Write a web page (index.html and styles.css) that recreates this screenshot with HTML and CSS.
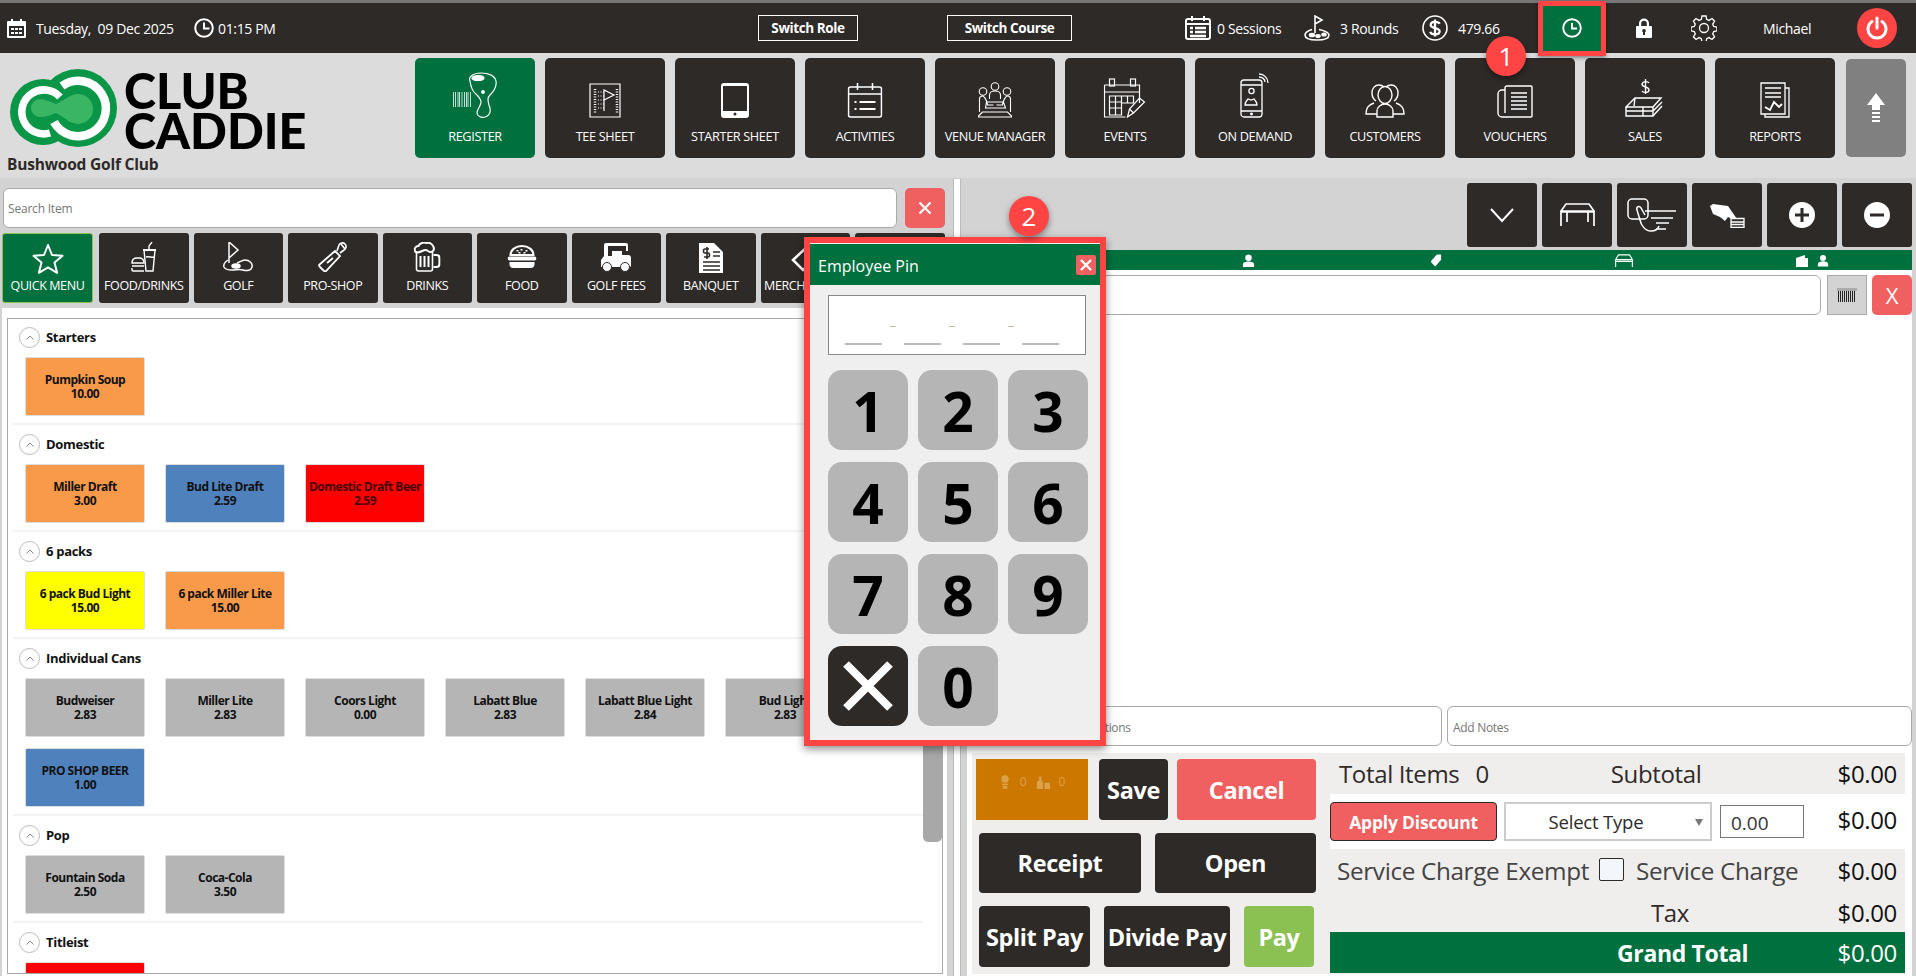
FILE: index.html
```html
<!DOCTYPE html>
<html lang="en">
<head>
<meta charset="utf-8">
<title>Club Caddie</title>
<link rel="stylesheet" href="styles.css">
</head>
<body>
<header class="topbar">
  <svg class="tb-cal" width="19" height="20" viewBox="0 0 19 20"><path fill="#fff" d="M1 3h3V1h2v2h7V1h2v2h3a1 1 0 0 1 1 1v15a1 1 0 0 1-1 1H1a1 1 0 0 1-1-1V4a1 1 0 0 1 1-1zm1 5v10h15V8z"/><path fill="#fff" d="M4 10h3v2H4zm4 0h3v2H8zm4 0h3v2h-3zM4 14h3v2H4zm4 0h3v2H8zm4 0h3v2h-3z"/></svg>
  <span class="tb-date">Tuesday,&nbsp; 09 Dec 2025</span>
  <svg class="tb-clock" width="20" height="20" viewBox="0 0 20 20" fill="none" stroke="#fff" stroke-width="2"><circle cx="10" cy="10" r="8.800"/><path d="M10 4.500V10.500H15.500"/></svg>
  <span class="tb-time">01:15 PM</span>
  <button class="switch sw-role">Switch Role</button>
  <button class="switch sw-course">Switch Course</button>
  <svg class="tb-sess" width="26" height="24" viewBox="0 0 26 24" fill="none" stroke="#fff" stroke-width="2"><rect x="1" y="3" width="24" height="20" rx="2"/><path d="M1 8h24M7 0v5M19 0v5"/><path stroke-width="2.500" d="M5 12h3M10 12h11M5 16h3M10 16h11M5 20h16"/></svg>
  <span class="tb-sess-t">0 Sessions</span>
  <svg class="tb-rounds" width="26" height="26" viewBox="0 0 26 26" fill="none" stroke="#fff" stroke-width="1.600"><path d="M11 18V1l7 4-7 4"/><path d="M8 14.500C3 16 1 18 1 20c0 3.500 6 5 12 5s12-1.500 12-5c0-2-3-4-10-5.500"/><ellipse fill="#fff" cx="8" cy="20" rx="2.500" ry="1.500"/><ellipse fill="#fff" cx="14" cy="21" rx="2" ry="1.300"/><ellipse fill="#fff" cx="20" cy="19.500" rx="2" ry="1.300"/></svg>
  <span class="tb-rounds-t">3 Rounds</span>
  <svg class="tb-dollar" width="26" height="26" viewBox="0 0 26 26"><circle cx="13" cy="13" r="12" fill="none" stroke="#fff" stroke-width="1.600"/><path fill="none" stroke="#fff" stroke-width="2.300" d="M17.500 8.800C17 7.200 15 6.800 13 6.800c-2.500 0-4.300 1.200-4.300 3.100 0 4.400 8.900 1.800 8.900 6.300 0 2-2 3.100-4.500 3.100-2.400 0-4.400-.8-4.800-2.600M13 4.500v17"/></svg>
  <span class="tb-bal">479.66</span>
  <div class="clockin">
    <svg width="20" height="20" viewBox="0 0 20 20" fill="none" stroke="#fff" stroke-width="1.900"><circle cx="10" cy="10" r="8.800"/><path d="M10 5v5.500h5"/></svg>
  </div>
  <svg class="tb-lock" width="16" height="20" viewBox="0 0 16 20"><path fill="#fff" fill-rule="evenodd" d="M3 8V5.500a5 5 0 0 1 10 0V8h2a1 1 0 0 1 1 1v10a1 1 0 0 1-1 1H1a1 1 0 0 1-1-1V9a1 1 0 0 1 1-1zm2.200 0h5.600V5.500a2.800 2.800 0 0 0-5.600 0zM8 11a1.800 1.800 0 0 0-1 3.300V17h2v-2.700A1.800 1.800 0 0 0 8 11z"/></svg>
  <svg class="tb-gear" width="26" height="26" viewBox="0 0 26 26" fill="none" stroke="#fff" stroke-width="1.300"><circle cx="13" cy="13" r="4.500"/><path d="M11 1h4l.7 3.400 2.300 1 3-1.900 2.600 2.700-1.900 2.900 1 2.300 3.300.7v3.800l-3.300.7-1 2.300 1.900 2.900-2.600 2.700-3-1.900-2.300 1-.7 3.400h-4l-.7-3.400-2.300-1-3 1.900-2.600-2.700 1.900-2.900-1-2.300-3.300-.7v-3.800l3.300-.7 1-2.300-1.900-2.900 2.600-2.700 3 1.900 2.300-1z"/></svg>
  <span class="tb-user">Michael</span>
  <button class="power" aria-label="Power">
    <svg width="22" height="24" viewBox="0 0 22 24" fill="none" stroke="#fff" stroke-width="3" stroke-linecap="round"><path d="M11 2v10M6 5.500a9 9 0 1 0 10 0"/></svg>
  </button>
</header>

<section class="header">
  <div class="brand">
    <div class="logo">
      <svg width="108" height="79" viewBox="10 9 108 79">
        <circle cx="43" cy="52" r="33" fill="#0a9647"/><circle cx="78" cy="48" r="39" fill="#0a9647"/>
        <path d="M60 37A22 22 0 1 0 50 73" fill="none" stroke="#fff" stroke-width="7.500"/>
        <path d="M62 26A27.700 27.700 0 1 1 54 62" fill="none" stroke="#fff" stroke-width="8.500"/>
        <circle cx="40" cy="48" r="9" fill="#39b564"/><circle cx="78" cy="49" r="15" fill="#39b564"/>
        <path d="M42 39Q52 42 56 44Q62 41 70 36V62Q62 56 56 53Q50 56 42 57Z" fill="#39b564"/>
      </svg>
      <div class="wordmark">CLUB<br>CADDIE</div>
    </div>
    <div class="club">Bushwood Golf Club</div>
  </div>
  <nav class="nav">
    <a class="nav-btn active">
      <svg width="44" height="46" viewBox="0 0 44 46" fill="none" stroke="#fff" stroke-width="1.200"><path stroke-width=".9" d="M.5 20v15M2.500 20v15M5 20v15M6.500 20v15M9 20v15M11.500 20v15M13.500 20v15M15 20v15M17.500 20v15" opacity=".85"/><path d="M17 9c-2-4 3-8 11-8 8 0 14 3 15 8 1 6-2 10-6 14-3 3-2 6-1 10 2 5 2 10-4 12-4 1-8-1-8-4 0-4 4-7 4-11 0-3-2-5-5-8-3-2-5-6-6-13z"/><ellipse cx="25" cy="6" rx="6" ry="2.500" fill="#fff"/><circle cx="30" cy="20" r="1.300" fill="#fff"/></svg>
      <span>REGISTER</span></a>
    <a class="nav-btn">
      <svg width="32" height="35" viewBox="0 0 32 35" fill="none" stroke="#fff" stroke-width="1.200"><path d="M1 1h30v33H1z"/><path stroke-width="2.500" stroke-dasharray="1 1.500" d="M6 6v24M28 6v24"/><path stroke-width="1.200" stroke-dasharray="1 1.500" d="M9 9h6M9 13h6M9 17h6M9 21h6M9 25h6"/><path d="M15 28V7l10 5-10 5"/></svg>
      <span>TEE SHEET</span></a>
    <a class="nav-btn">
      <svg width="28" height="35" viewBox="0 0 28 35"><path fill="#fff" fill-rule="evenodd" d="M3 0h22a3 3 0 0 1 3 3v29a3 3 0 0 1-3 3H3a3 3 0 0 1-3-3V3a3 3 0 0 1 3-3zm-1 3v25h24V3z"/><circle cx="14" cy="31" r="1.500" fill="#2e2a28"/></svg>
      <span>STARTER SHEET</span></a>
    <a class="nav-btn">
      <svg width="35" height="35" viewBox="0 0 35 35" fill="none" stroke="#fff" stroke-width="1.600"><rect x="1" y="4" width="33" height="30" rx="2"/><path d="M1 11h33M10 0v7M25 0v7"/><path stroke-width="2" d="M7 19h2M12 19h16M7 26h2M12 26h16"/></svg>
      <span>ACTIVITIES</span></a>
    <a class="nav-btn">
      <svg width="35" height="36" viewBox="0 0 35 36" fill="none" stroke="#fff" stroke-width="1.100"><circle cx="17.500" cy="4.500" r="3.800"/><circle cx="5.500" cy="9.500" r="3.800"/><circle cx="29.500" cy="9.500" r="3.800"/><path d="M12 17v-4c0-2 2-4 5.500-4s5.500 2 5.500 4v4M2 30V17c0-2 1-3 3-3s5 6 5 9h6M33 30V17c0-2-1-3-3-3s-5 6-5 9h-6M9 20h17l2 6H8zM5 30 1 34v1h33v-1l-4-4z"/></svg>
      <span>VENUE MANAGER</span></a>
    <a class="nav-btn">
      <svg width="43" height="40" viewBox="0 0 43 40" fill="none" stroke="#fff" stroke-width="1.200"><path d="M1 7h35v18M22 39H1V7M1 14h35"/><rect x="6" y="1" width="5" height="7"/><rect x="27" y="1" width="5" height="7"/><path d="M6 18h24v7H18v12H6zM6 24h12M6 30h12M12 18v19M18 18v7M24 18v7"/><path d="M24 39l2-8 10-11 5 4-11 11zM26 31l4 4"/></svg>
      <span>EVENTS</span></a>
    <a class="nav-btn">
      <svg width="30" height="46" viewBox="0 0 30 46" fill="none" stroke="#fff" stroke-width="1.300"><rect x="1" y="8" width="21" height="37" rx="3"/><path d="M1 13h21M1 39h21"/><circle cx="11.500" cy="19" r="2.600"/><path d="M5 33c0-2 1-4 3-6l3 1 3-1c2 2 3 4 3 6z"/><circle cx="11.500" cy="42" r=".8" fill="#fff"/><path d="M19 5c3 0 6 2 6 5M19 2c5 0 9 4 9 9"/></svg>
      <span>ON DEMAND</span></a>
    <a class="nav-btn">
      <svg width="40" height="34" viewBox="0 0 40 34" fill="none" stroke="#fff" stroke-width="1.400"><path d="M11 17c-3-2-4-5-4-8 0-5 3-8 7-8 2 0 4 1 5 2M29 17c3-2 4-5 4-8 0-5-3-8-7-8-2 0-4 1-5 2"/><ellipse cx="20" cy="11" rx="7" ry="8.500"/><path d="M12 33v-6c0-4 4-7 8-7s8 3 8 7v6zM12 30H1c0-6 2-9 8-11M28 30h11c0-6-2-9-8-11"/></svg>
      <span>CUSTOMERS</span></a>
    <a class="nav-btn">
      <svg width="36" height="33" viewBox="0 0 36 33" fill="none" stroke="#fff" stroke-width="1.400"><path d="M8 5V3a2 2 0 0 1 2-2h24a1 1 0 0 1 1 1v29a1 1 0 0 1-1 1H5a4 4 0 0 1-4-4V9a4 4 0 0 1 4-4h3v23"/><path stroke-width="1.700" d="M14 8h16M14 12h16M14 16h16M14 20h16M14 24h16"/></svg>
      <span>VOUCHERS</span></a>
    <a class="nav-btn">
      <svg width="40" height="39" viewBox="0 0 40 39" fill="none" stroke="#fff" stroke-width="1.400"><path d="M24 4c-1-2-6-2-7 1 0 4 7 2 7 6 0 3-6 3-7 1M20.500 0v15"/><path d="M10 19h26l-8 9H1zM1 28v4l27 0 9-9M1 32v5h27l9-10M10 19l-1 8M18 28v9M28 28v9"/></svg>
      <span>SALES</span></a>
    <a class="nav-btn">
      <svg width="30" height="36" viewBox="0 0 30 36" fill="none" stroke="#fff" stroke-width="1.300"><path d="M1 1h24v31H1zM25 6h4v29H5v-3"/><path d="M5 6h16M5 11h16M5 15h16"/><path stroke-width="1.800" d="M5 25l5 3 4-8 5 5 3-3"/></svg>
      <span>REPORTS</span></a>
  </nav>
  <button class="nav-up" aria-label="Collapse">
    <svg width="18" height="30" viewBox="0 0 18 30" fill="#fff"><path d="M9 0l9 12h-5v5H5v-5H0zM5 19h8v2H5zM5 23h8v2H5zM5 27h8v2H5z"/></svg>
  </button>
</section>

<main class="main">
  <section class="left">
    <div class="search-row">
      <input class="search" placeholder="Search Item">
      <button class="red-x" aria-label="Clear">
        <svg width="14" height="14" viewBox="0 0 14 14" stroke="#fff" stroke-width="2.200"><path d="M1.500 1.500l11 11M12.500 1.500l-11 11"/></svg>
      </button>
    </div>
    <div class="cats">
      <a class="cat active"><svg width="32" height="32" viewBox="0 0 32 32" fill="none" stroke="#fff" stroke-width="2"><path d="M16 2l4 10 10.500.8-8 6.700 2.600 10.300L16 24.300l-9.100 5.500 2.600-10.300-8-6.700L12 12z" stroke-linejoin="round"/></svg><span>QUICK MENU</span></a>
      <a class="cat"><svg width="26" height="30" viewBox="0 0 26 30" fill="none" stroke="#fff" stroke-width="1.400"><path stroke-width="2" d="M12 8h13"/><path d="M13 8l2 21h7l2-21M18 8V4l3-4M15 15c3-1 6 1 8 0"/><path d="M1 21c0-4 3-5 5-5h2c2 0 5 1 5 5zM1 24h12M1 26v2a1 1 0 0 0 1 1h11"/></svg><span>FOOD/DRINKS</span></a>
      <a class="cat"><svg width="30" height="30" viewBox="0 0 30 30" fill="none" stroke="#fff" stroke-width="1.500"><path d="M6 21V0l9 8-9 8" /><path d="M5 18C2 20 0 22 1 25c1 2 4 3 8 3 4 0 7-1 11 0s8 1 9-3c1-4-3-7-7-7-3 0-5 2-8 3"/><ellipse cx="13" cy="24" rx="4" ry="2" fill="#fff"/></svg><span>GOLF</span></a>
      <a class="cat"><svg width="30" height="30" viewBox="0 0 30 30" fill="none" stroke="#fff" stroke-width="1.800"><path d="M1 23L17 9l5 5L8 29c-1 1-2 0-3-1l-3-3c-1-1-1-2-1-2z"/><path d="M9 21l6-5"/><path stroke-width="1.600" d="M19 9l2-6c1-2 4-3 6-1s1 5-1 6l-4 3M23 2l4 5"/></svg><span>PRO-SHOP</span></a>
      <a class="cat"><svg width="27" height="30" viewBox="0 0 27 30" fill="none" stroke="#fff" stroke-width="1.600"><path d="M3 9v18a2 2 0 0 0 2 2h12a2 2 0 0 0 2-2V9"/><path stroke-width="2" d="M2 10C0 7 2 4 5 4c1-3 5-4 8-3 3-1 6 1 7 4 1 2 0 5-3 5-2 0-3-2-5-2-3 0-7 4-10 2z"/><path stroke-width="2" d="M7 14v11M11 14v11M15 14v11"/><path stroke-width="2.200" d="M20 13h3a3 3 0 0 1 3 3v6a3 3 0 0 1-3 3h-3"/></svg><span>DRINKS</span></a>
      <a class="cat cat-low"><svg width="29" height="24" viewBox="0 0 29 24"><path fill="none" stroke="#fff" stroke-width="2" d="M3 10C3 5 8 1 14.500 1S26 5 26 10z"/><path fill="#fff" d="M9 5h2v1.500H9zm4-1h2v1.500h-2zm5 1h2v1.500h-2zM11 7h2v1.500h-2zm5 0h2v1.500h-2z"/><rect y="11.500" width="29" height="4" rx="2" fill="#fff"/><path fill="#fff" d="M2 17h25v2a4 4 0 0 1-4 4H6a4 4 0 0 1-4-4z"/></svg><span>FOOD</span></a>
      <a class="cat"><svg width="32" height="30" viewBox="0 0 32 30" fill="#fff"><path fill-rule="evenodd" d="M6 1h20a2 2 0 0 1 2 2v6H26V4H8v10h4V9h10v4h6a3 3 0 0 1 3 3v8l-1 1H1v-7l3-4V3a2 2 0 0 1 2-2z"/><circle cx="7" cy="25" r="4.500" stroke="#2e2a28"/><circle cx="25" cy="25" r="4.500" stroke="#2e2a28"/></svg><span>GOLF FEES</span></a>
      <a class="cat"><svg width="26" height="32" viewBox="0 0 26 32"><path fill="#fff" d="M1 1h15l9 9v21H1z"/><path fill="none" stroke="#2e2a28" stroke-width="1.600" d="M11 7H7c-2 0-2 4 0 4h3c2 0 2 4 0 4H6M9 5v12M15 10h7M15 14h7M5 20h17M5 24h17M5 28h17"/></svg><span>BANQUET</span></a>
      <a class="cat"><svg width="30" height="30" viewBox="0 0 30 30" fill="none" stroke="#fff" stroke-width="2.500"><path d="M3 18L18 4l8 0 1 9-14 15z"/></svg><span>MERCHANDISE</span></a>
      <a class="cat"><svg width="30" height="30" viewBox="0 0 30 30" fill="#fff"><circle cx="15" cy="16" r="12"/></svg><span>MISC</span></a>
    </div>
    <div class="menu-wrap">
      <div class="panel">
        <div class="list">
          <section class="sec">
            <h3 class="sec-h"><span class="chev"><svg width="8" height="5" viewBox="0 0 8 5" fill="none" stroke="#888"><path d="M.5 4.500L4 1l3.500 3.500"/></svg></span>Starters</h3>
            <div class="tiles">
              <div class="tile orange">Pumpkin Soup<br>10.00</div>
            </div>
          </section>
          <section class="sec">
            <h3 class="sec-h"><span class="chev"><svg width="8" height="5" viewBox="0 0 8 5" fill="none" stroke="#888"><path d="M.5 4.500L4 1l3.500 3.500"/></svg></span>Domestic</h3>
            <div class="tiles">
              <div class="tile orange">Miller Draft<br>3.00</div>
              <div class="tile blue">Bud Lite Draft<br>2.59</div>
              <div class="tile red">Domestic Draft Beer<br>2.59</div>
            </div>
          </section>
          <section class="sec">
            <h3 class="sec-h"><span class="chev"><svg width="8" height="5" viewBox="0 0 8 5" fill="none" stroke="#888"><path d="M.5 4.500L4 1l3.500 3.500"/></svg></span>6 packs</h3>
            <div class="tiles">
              <div class="tile yellow">6 pack Bud Light<br>15.00</div>
              <div class="tile orange">6 pack Miller Lite<br>15.00</div>
            </div>
          </section>
          <section class="sec">
            <h3 class="sec-h"><span class="chev"><svg width="8" height="5" viewBox="0 0 8 5" fill="none" stroke="#888"><path d="M.5 4.500L4 1l3.500 3.500"/></svg></span>Individual Cans</h3>
            <div class="tiles">
              <div class="tile grey">Budweiser<br>2.83</div>
              <div class="tile grey">Miller Lite<br>2.83</div>
              <div class="tile grey">Coors Light<br>0.00</div>
              <div class="tile grey">Labatt Blue<br>2.83</div>
              <div class="tile grey">Labatt Blue Light<br>2.84</div>
              <div class="tile grey">Bud Light<br>2.83</div>
              <div class="tile blue">PRO SHOP BEER<br>1.00</div>
            </div>
          </section>
          <section class="sec">
            <h3 class="sec-h"><span class="chev"><svg width="8" height="5" viewBox="0 0 8 5" fill="none" stroke="#888"><path d="M.5 4.500L4 1l3.500 3.500"/></svg></span>Pop</h3>
            <div class="tiles">
              <div class="tile grey">Fountain Soda<br>2.50</div>
              <div class="tile grey">Coca-Cola<br>3.50</div>
            </div>
          </section>
          <section class="sec">
            <h3 class="sec-h"><span class="chev"><svg width="8" height="5" viewBox="0 0 8 5" fill="none" stroke="#888"><path d="M.5 4.500L4 1l3.500 3.500"/></svg></span>Titleist</h3>
            <div class="tiles">
              <div class="tile red"></div>
            </div>
          </section>
        </div>
        <div class="track"><div class="thumb"></div></div>
      </div>
    </div>
  </section>

  <div class="splitter"></div>

  <section class="right">
    <div class="tools">
      <button class="tool"><svg width="24" height="15" viewBox="0 0 24 15" fill="none" stroke="#fff" stroke-width="2"><path d="M1 1l11 12L23 1"/></svg></button>
      <button class="tool"><svg width="35" height="24" viewBox="0 0 35 24" fill="none" stroke="#fff" stroke-width="1.700"><path d="M6 1h23l5 7H1zM1 8v15M34 8v15M1 9h33M7 9v10M28 9v10"/></svg></button>
      <button class="tool"><svg width="50" height="34" viewBox="0 0 50 34" fill="none" stroke="#fff" stroke-width="1.500"><rect x="1" y="1" width="20" height="20" rx="4"/><path d="M10 12c-1-3 2-5 4-2l4 7M18 13H49M24 20H46M29 25H42M29 31H39M10 12l3 10c1 5 5 11 11 11 5 0 7-2 8-5"/></svg></button>
      <button class="tool"><svg width="35" height="26" viewBox="0 0 35 26"><path fill="#fff" d="M0 4l3-2 15 2 9 13h-5l-4-2-3 4-5-4-7-3z"/><path fill="none" stroke="#fff" stroke-width="1.300" d="M21 16.500h13v9H21zM21 20h13M21 22.500h13"/></svg></button>
      <button class="tool"><svg width="26" height="26" viewBox="0 0 26 26"><circle cx="13" cy="13" r="13" fill="#fff"/><path stroke="#2e2a28" stroke-width="3" d="M13 6v14M6 13h14"/></svg></button>
      <button class="tool"><svg width="26" height="26" viewBox="0 0 26 26"><circle cx="13" cy="13" r="13" fill="#fff"/><path stroke="#2e2a28" stroke-width="3" d="M6 13h14"/></svg></button>
    </div>
    <div class="strip">
      <span></span>
      <span><svg width="13" height="13" viewBox="0 0 14 14" fill="#fff"><circle cx="7" cy="4" r="3.500"/><path d="M1 14v-3c0-2 3-3 6-3s6 1 6 3v3z"/></svg></span>
      <span><svg width="12" height="13" viewBox="0 0 14 14" fill="#fff"><path d="M8 0h5v6l-7 8-4-4-1-2z"/></svg></span>
      <span><svg width="20" height="13" viewBox="0 0 20 14" fill="none" stroke="#fff" stroke-width="1.200"><path d="M4 1h12l3 5H1zM1 6v8M19 6v8M1 8h18"/></svg></span>
      <span class="strip-pair"><svg width="14" height="12" viewBox="0 0 14 12" fill="#fff"><path d="M1 3l9-3v3h3v9H1z"/></svg><svg width="12" height="13" viewBox="0 0 14 14" fill="#fff"><circle cx="7" cy="4" r="3.500"/><path d="M1 14v-3c0-2 3-3 6-3s6 1 6 3v3z"/></svg></span>
    </div>
    <div class="order">
      <div class="order-row">
        <input class="order-in">
        <button class="barcode" aria-label="Scan"><svg width="20" height="14" viewBox="0 0 20 14"><path fill="#aaa" d="M0 0h20v3H0z"/><path stroke="#222" stroke-width="1" d="M1.500 3v11M3.500 3v11M5.500 3v11M7.500 3v11M9.500 3v11M11.500 3v11M13.500 3v11M15.500 3v11M17.500 3v11"/></svg></button>
        <button class="red-x x-text">X</button>
      </div>
      <div class="notes">
        <input class="note note-a" placeholder="Add Special Instructions">
        <input class="note" placeholder="Add Notes">
      </div>
      <div class="summary">
        <div class="actions">
          <div class="act-row a1">
            <div class="a-orange"><svg width="12" height="14" viewBox="0 0 16 18" fill="#dba04a"><circle cx="8" cy="5" r="5"/><path d="M4 11h8v2H4zM5 14h6v4H5z"/></svg><span>0</span><svg width="14" height="14" viewBox="0 0 18 18" fill="#dba04a"><path d="M4 2h3v4l2 3v9H1V9l3-3zM11 10h7v8h-7z"/></svg><span>0</span></div>
            <button class="act dark a-save">Save</button>
            <button class="act coral a-cancel">Cancel</button>
          </div>
          <div class="act-row a2">
            <button class="act dark a-receipt">Receipt</button>
            <button class="act dark a-open">Open</button>
          </div>
          <div class="act-row a3">
            <button class="act dark a-split">Split Pay</button>
            <button class="act dark a-divide">Divide Pay</button>
            <button class="act lime a-pay">Pay</button>
          </div>
        </div>
        <div class="totals">
          <div class="t-row r1"><span class="t-items">Total Items</span><span class="t-count">0</span><span class="t-sub">Subtotal</span><span class="amt">$0.00</span></div>
          <div class="t-row r2"><button class="apply">Apply Discount</button><div class="select">Select Type<i class="caret"></i></div><input class="disc" value="0.00"><span class="amt">$0.00</span></div>
          <div class="t-row r3"><span class="sc-ex">Service Charge Exempt</span><span class="check"></span><span class="sc">Service Charge</span><span class="amt">$0.00</span></div>
          <div class="t-row r4"><span class="tax">Tax</span><span class="amt">$0.00</span></div>
          <div class="t-row r5"><span class="gt">Grand Total</span><span class="amt">$0.00</span></div>
        </div>
      </div>
    </div>
  </section>
</main>

<div class="bubble b1">1</div>
<div class="bubble b2">2</div>

<aside class="pin-modal">
  <div class="pin-head"><span>Employee Pin</span><button class="pin-close" aria-label="Close"><svg width="12" height="12" viewBox="0 0 12 12" stroke="#fff" stroke-width="2.400"><path d="M1 1l10 10M11 1L1 11"/></svg></button></div>
  <div class="pin-body">
    <div class="pin-box">
      <i class="slot"></i><i class="sep"></i><i class="slot"></i><i class="sep"></i><i class="slot"></i><i class="sep"></i><i class="slot"></i>
    </div>
    <div class="keys">
      <button class="key">1</button><button class="key">2</button><button class="key">3</button>
      <button class="key">4</button><button class="key">5</button><button class="key">6</button>
      <button class="key">7</button><button class="key">8</button><button class="key">9</button>
      <button class="key key-x" aria-label="Clear"><svg width="50" height="50" viewBox="0 0 50 50" stroke="#fff" stroke-width="8"><path d="M3 3l44 44M47 3L3 47"/></svg></button><button class="key">0</button>
    </div>
  </div>
</aside>
</body>
</html>
```
FILE: styles.css
```css
* { box-sizing: border-box; }
html, body { margin: 0; padding: 0; }
body {
  width: 1916px; height: 976px; overflow: hidden; position: relative;
  font-family: "Open Sans", "Noto Sans", sans-serif; background: #ebebeb; color: #111;
  display: flex; flex-direction: column;
}
button { font-family: inherit; border: 0; padding: 0; cursor: pointer; }
input { font-family: inherit; outline: none; }
svg { display: block; flex: none; }

/* top bar */
.topbar {
  height: 53px; flex: none; background: #2e2a28; border-top: 3px solid #777;
  display: flex; align-items: center; color: #fff; font-size: 14px; letter-spacing: -.35px;
}
.tb-cal { margin-left: 7px; }
.tb-date { margin-left: 10px; width: 148px; white-space: nowrap; }
.tb-clock { margin-left: 10px; }
.tb-time { margin-left: 4px; width: 60px; }
.switch {
  height: 26px; background: transparent; border: 1px solid #fff; color: #fff;
  font-weight: 700; font-size: 13.500px; letter-spacing: -.4px;
}
.sw-role { margin-left: 480px; width: 100px; }
.sw-course { margin-left: 89px; width: 125px; }
.tb-sess { margin-left: 113px; }
.tb-sess-t { margin-left: 6px; width: 70px; white-space: nowrap; }
.tb-rounds { margin-left: 17px; }
.tb-rounds-t { margin-left: 10px; width: 62px; white-space: nowrap; }
.tb-dollar { margin-left: 20px; }
.tb-bal { margin-left: 10px; width: 42px; }
.clockin {
  margin-left: 38px; width: 68px; height: 55px; flex: none;
  background: #00703f; border: 5px solid #ff4444;
  display: flex; align-items: center; justify-content: center;
  box-shadow: 0 2px 4px rgba(0,0,0,.4);
  position: relative; z-index: 3;
}
.tb-lock { margin-left: 30px; }
.tb-gear { margin-left: 39px; }
.tb-user { margin-left: 46px; width: 94px; }
.power {
  width: 40px; height: 40px; border-radius: 50%; background: #ff4444;
  display: flex; align-items: center; justify-content: center;
}

/* header */
.header {
  height: 125px; flex: none; background: #dcdcdc; display: flex; align-items: flex-start;
  padding-top: 5px;
}
.brand { width: 415px; flex: none; padding-top: 11px; }
.logo { display: flex; padding-left: 10px; gap: 6px; height: 81px; }
.wordmark {
  font-family: Lato, "Liberation Sans", sans-serif; font-weight: 900; font-size: 48.500px; line-height: 40px; color: #000;
  padding-top: 1px;
}
.club { margin: 3px 0 0 7px; font-weight: 700; font-size: 15.500px; color: #2e2a28; letter-spacing: -.2px; }
.nav { display: flex; gap: 10px; }
.nav-btn {
  width: 120px; height: 100px; background: #2e2a28; border-radius: 5px; color: #fff;
  position: relative; font-size: 12.700px; letter-spacing: -.35px;
  display: flex; flex-direction: column; align-items: center; justify-content: flex-end; padding-bottom: 13px;
}
.nav-btn svg { position: absolute; left: 50%; transform: translateX(-50%); bottom: 40px; }
.nav-btn.active { background: #00703f; }
.nav-up {
  margin: 1px 0 0 11px; width: 60px; height: 98px; background: #808080; border-radius: 5px;
  display: flex; align-items: center; justify-content: center;
}

/* main */
.main { flex: 1; display: flex; min-height: 0; }
.left { width: 953px; flex: none; background: #d3d3d3; display: flex; flex-direction: column; }
.search-row { display: flex; gap: 8px; padding: 10px 0 0 3px; }
.search {
  width: 894px; height: 40px; border: 1px solid #aaa; border-radius: 6px; background: #fff;
  font-size: 12px; padding: 1px 4px 0; letter-spacing: -.2px;
}
.search::placeholder, .note::placeholder { color: #777; opacity: 1; }
.red-x {
  width: 40px; height: 40px; border-radius: 5px; background: #f06060; color: #fff;
  display: flex; align-items: center; justify-content: center;
}
.cats { display: flex; gap: 5px; margin-top: 5px; padding-left: 2px; overflow: hidden; flex: none; }
.cat {
  width: 89.500px; height: 70px; flex: none; background: #2e2a28; border-radius: 3px; color: #fff;
  font-size: 12.500px; letter-spacing: -.4px; white-space: nowrap;
  display: flex; flex-direction: column; align-items: center; position: relative;
  padding-top: 44px; line-height: 17px;
}
.cat svg { position: absolute; left: 50%; transform: translateX(-50%); top: 9px; }
.cat.cat-low svg { top: 12px; }
.cat.active { background: #00703f; border: 1px solid #8bc152; width: 91px; padding-top: 43px; margin-right: 1px; }
.menu-wrap { flex: 1; min-height: 0; margin-top: 5px; background: #fff; margin-left: 2px; margin-right: 6px; padding: 10px 4px 2px 5px; }
.panel { height: 100%; border: 1px solid #aaa; display: flex; overflow: hidden; }
.list { flex: 1; min-width: 0; padding: 7px 0 0 5px; }
.sec { border-bottom: 2px solid #f4f4f4; padding-bottom: 7px; }
.sec + .sec { padding-top: 8px; }
.sec-h { margin: 0 0 9px 0; height: 22px; display: flex; align-items: center; font-size: 13px; font-weight: 700; color: #111; letter-spacing: -.3px; padding-left: 6px; }
.chev {
  width: 21px; height: 21px; border: 1px solid #bbb; border-radius: 50%; margin-right: 6px; flex: none;
  display: flex; align-items: center; justify-content: center;
}
.tiles { display: flex; flex-wrap: wrap; gap: 11px 20px; padding-left: 12px; }
.tile {
  width: 120px; height: 59px; border: 1px solid #ddd; border-radius: 2px; flex: none;
  display: flex; align-items: center; justify-content: center; text-align: center;
  font-size: 12px; font-weight: 700; line-height: 14px; color: #111; letter-spacing: -.5px;
  padding: 0 1px;
}
.orange { background: #f99a4a; }
.blue { background: #4f81bd; }
.red { background: #ff0000; color: #400; }
.yellow { background: #ffff00; }
.grey { background: #b5b5b5; }
.track { width: 19px; flex: none; }
.thumb { height: 523px; background: #a8a8a8; border-radius: 0 0 5px 5px; }

.splitter { width: 8px; flex: none; background: #fff; border: 1px solid #bbb; border-bottom: 0; border-top-color: #ccc; }

.right { flex: 1; min-width: 0; background: #d3d3d3; padding-left: 6px; padding-right: 4px; display: flex; flex-direction: column; }
.tools { display: flex; justify-content: flex-end; gap: 5px; padding-top: 5px; height: 72px; flex: none; }
.tool { width: 70px; height: 64px; background: #2e2a28; border-radius: 3px; display: flex; align-items: center; justify-content: center; }
.strip { height: 20px; flex: none; background: #00703f; display: grid; grid-template-columns: repeat(5, 1fr); justify-items: center; align-items: center; padding-right: 6px; }
.strip-pair { display: flex; gap: 8px; align-items: flex-end; }
.order { flex: 1; min-height: 0; background: #fff; display: flex; flex-direction: column; padding: 5px 0 2px 0; }
.order-row { display: flex; height: 40px; flex: none; }
.order-in { width: 854px; height: 40px; border: 1px solid #aaa; border-radius: 6px; background: #fff; }
.barcode { margin-left: 6px; width: 40px; height: 40px; background: #d3d3d3; border: 1px solid #aaa; display: flex; align-items: center; justify-content: center; }
.x-text { margin-left: 5px; font-size: 22px; font-weight: 400; }
.notes { display: flex; gap: 5px; margin-top: auto; height: 40px; flex: none; }
.note { height: 40px; border: 1px solid #aaa; border-radius: 6px; background: #fff; font-size: 12px; padding: 2px 5px 0; letter-spacing: -.3px; width: 465px; }
.note-a { width: 475px; padding-left: 36px; }
.summary { margin: 7px 7px 0 5px; height: 221px; flex: none; background: #f0eded; display: flex; }
.actions { width: 358px; flex: none; padding-top: 6px; }
.act-row { display: flex; }
.a1 { height: 61px; }
.a2 { height: 60px; margin-top: 13px; }
.a3 { height: 61px; margin-top: 13px; }
.act { height: 100%; border-radius: 4px; color: #fff; font-weight: 700; font-size: 23.500px; letter-spacing: -.4px; white-space: nowrap; }
.dark { background: #2e2a28; }
.coral { background: #f06060; }
.lime { background: #8bc152; }
.a-orange { margin-left: 4px; width: 112px; background: #cc7700; color: #dba04a; font-size: 12px; display: flex; align-items: center; justify-content: center; gap: 9px; padding-bottom: 16px; }
.a-save { margin-left: 11px; width: 69px; }
.a-cancel { margin-left: 9px; width: 139px; }
.a-receipt { margin-left: 7px; width: 162px; }
.a-open { margin-left: 14px; width: 161px; }
.a-split { margin-left: 7px; width: 111px; }
.a-divide { margin-left: 14px; width: 126px; }
.a-pay { margin-left: 14px; width: 70px; }
.totals { flex: 1; min-width: 0; display: flex; flex-direction: column; font-size: 24px; color: #2e2a28; letter-spacing: -.35px; }
.t-row { display: flex; align-items: center; padding-right: 8px; white-space: nowrap; }
.amt { margin-left: auto; color: #111; }
.r1 { height: 41px; padding-left: 9px; }
.t-count { margin-left: 16px; }
.t-sub { margin-left: 122px; }
.r2 { height: 55px; background: #fff; }
.r2 .amt { padding-bottom: 4px; }
.apply { width: 167px; height: 39px; background: #f06060; border: 1px solid #2e2a28; border-radius: 4px; color: #fff; font-weight: 700; font-size: 17.500px; letter-spacing: -.2px; }
.select {
  margin-left: 7px; width: 208px; height: 39px; background: #fff; border: 2px solid #ccc; font-size: 18.500px;
  display: flex; align-items: center; justify-content: center; position: relative; padding-right: 24px; letter-spacing: -.2px;
}
.caret { position: absolute; right: 7px; top: 15px; border: 4px solid transparent; border-top: 7px solid #777; border-bottom: 0; }
.disc { margin-left: 8px; width: 84px; height: 33px; border: 1px solid #777; font-size: 19px; padding: 2px 10px 0; color: #333; }
.r3 { height: 44px; padding-left: 7px; color: #444; font-size: 24.300px; }
.r3 .sc-ex, .r3 .sc { padding-bottom: 2px; }
.r3 .amt { font-size: 24px; padding-bottom: 2px; }
.check { margin-left: 10px; width: 25px; height: 23px; border: 1px solid #2e2a28; background: #f3f6fb; border-radius: 2px; flex: none; margin-bottom: 4px; }
.sc { margin-left: 12px; }
.r4 { height: 39px; }
.tax { margin-left: 321px; }
.r5 { height: 41px; background: #00703f; color: #fff; font-weight: 600; }
.r5 .amt { color: #fff; font-weight: 400; }
.gt { margin-left: 287px; font-weight: 700; font-size: 23px; }

/* overlays */
.bubble {
  position: absolute; width: 40px; height: 40px; border-radius: 50%; background: #ff4444; color: #fff;
  display: flex; align-items: center; justify-content: center; font-size: 26px;
  box-shadow: 0 3px 6px rgba(0,0,0,.4); z-index: 4;
}
.b1 { left: 1486px; top: 36px; }
.b2 { left: 1009px; top: 196px; }
.pin-modal {
  position: absolute; left: 804px; top: 237px; width: 302px; height: 509px;
  border: 6px solid #ff4444; background: #efefef; box-shadow: 0 3px 8px rgba(0,0,0,.45); z-index: 3;
  display: flex; flex-direction: column;
}
.pin-head {
  height: 41px; flex: none; background: #00703f; color: #fff; font-size: 16px; margin-top: 1px;
  display: flex; align-items: center; justify-content: space-between; padding: 2px 4px 0 8px;
}
.pin-close { width: 20px; height: 20px; background: #f06060; border-radius: 2px; display: flex; align-items: center; justify-content: center; margin-bottom: 2px; }
.pin-body { padding: 10px 0 0 18px; }
.pin-box {
  width: 258px; height: 60px; background: #fff; border: 1px solid #888; margin-bottom: 15px;
  display: flex; align-items: flex-start; padding: 47px 0 0 16px;
}
.slot { width: 37px; height: 2px; background: #bbb; flex: none; }
.sep { width: 6px; height: 1px; background: #c9b8a8; margin: -17px 8px 0 8px; flex: none; }
.keys { display: grid; grid-template-columns: repeat(3, 80px); grid-auto-rows: 80px; gap: 12px 10px; }
.key {
  background: #b5b5b5; border-radius: 14px; color: #000; font-weight: 700; font-size: 55px; line-height: 1;
  display: flex; align-items: center; justify-content: center;
}
.key-x { background: #2e2a28; }
```
